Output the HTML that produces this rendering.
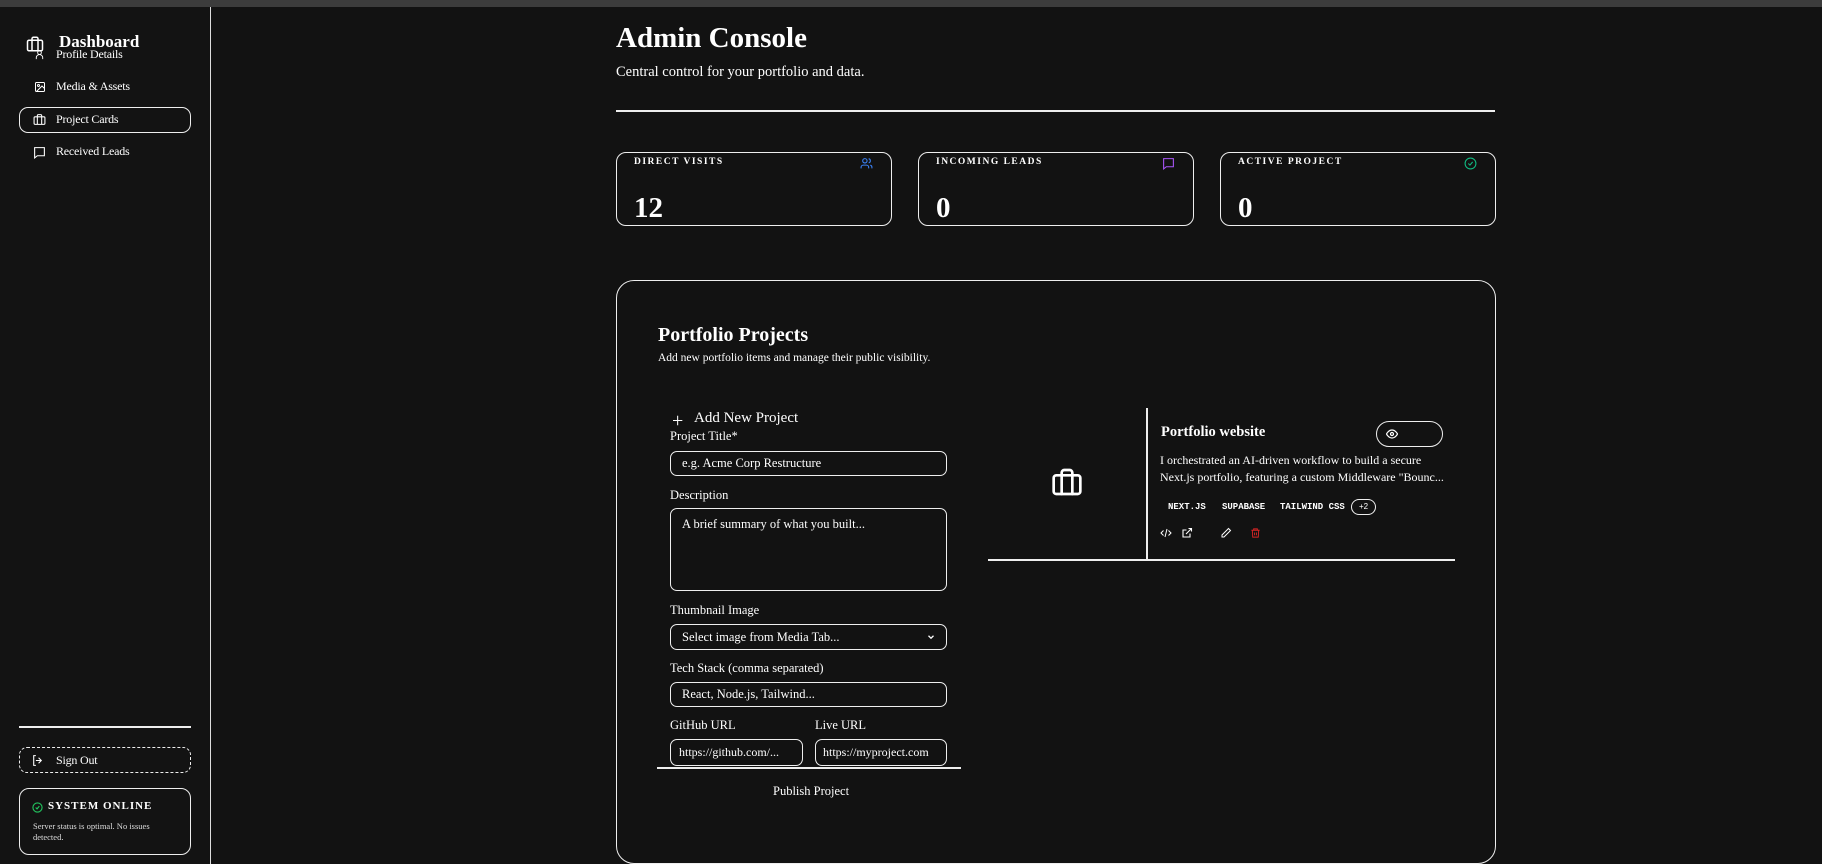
<!DOCTYPE html>
<html><head><meta charset="utf-8"><style>
*{box-sizing:border-box;margin:0;padding:0}
body{width:1822px;height:864px;overflow:hidden;background:#121212;color:#fff;font-family:"Liberation Serif",serif;position:relative}
.a{position:absolute;white-space:nowrap}
.top{left:0;top:0;width:1822px;height:7px;background:#3c3c3c}
.side{left:0;top:7px;width:211px;height:857px;border-right:1px solid #ddd;background:#131313}
.nav{font-size:12px;letter-spacing:-0.2px}
.box{border:1.5px solid #eee;border-radius:8px}
.lab{font-size:12.5px}
.inp{border:1.5px solid #eee;border-radius:7px;font-size:12.5px;padding-left:11px;display:flex;align-items:center}
svg{display:block}
.tag{font-family:"Liberation Mono",monospace;font-weight:bold;font-size:9px}
</style></head><body>
<div class="a top"></div>
<div class="a side"></div>

<svg class="a" style="left:26px;top:35px" width="18" height="18" viewBox="0 0 24 24" fill="none" stroke="#fff" stroke-width="2"><rect x="2" y="7" width="20" height="14" rx="2"/><path d="M16 21V5a2 2 0 0 0-2-2h-4a2 2 0 0 0-2 2v16M8 7v14"/></svg>
<div class="a" style="left:59px;top:32px;font-size:17px;font-weight:bold">Dashboard</div>
<svg class="a" style="left:34px;top:48px" width="11" height="13" viewBox="0 0 24 24" fill="none" stroke="#fff" stroke-width="2"><circle cx="12" cy="8" r="4"/><path d="M5 22v-3a6 6 0 0 1 14 0v3"/></svg>
<div class="a nav" style="left:56px;top:47px">Profile Details</div>
<svg class="a" style="left:34px;top:81px" width="12" height="12" viewBox="0 0 24 24" fill="none" stroke="#fff" stroke-width="2"><rect x="3" y="3" width="18" height="18" rx="2"/><circle cx="9" cy="9" r="2"/><path d="M21 15l-5-5L5 21"/></svg>
<div class="a nav" style="left:56px;top:79px">Media &amp; Assets</div>
<div class="a" style="left:19px;top:107px;width:172px;height:26px;border:1.5px solid #eee;border-radius:9px"></div>
<svg class="a" style="left:33px;top:113px" width="13" height="13" viewBox="0 0 24 24" fill="none" stroke="#fff" stroke-width="2"><rect x="2" y="7" width="20" height="14" rx="2"/><path d="M16 21V5a2 2 0 0 0-2-2h-4a2 2 0 0 0-2 2v16M8 7v14"/></svg>
<div class="a nav" style="left:56px;top:112px">Project Cards</div>
<svg class="a" style="left:33px;top:146px" width="13" height="13" viewBox="0 0 24 24" fill="none" stroke="#fff" stroke-width="2"><path d="M3 3h18v15H8l-5 4z"/></svg>
<div class="a nav" style="left:56px;top:144px">Received Leads</div>

<div class="a" style="left:19px;top:726px;width:172px;height:1.5px;background:#eee"></div>
<div class="a" style="left:19px;top:747px;width:172px;height:26px;border:1.5px dashed #eee;border-radius:8px"></div>
<svg class="a" style="left:31px;top:754px" width="13" height="13" viewBox="0 0 24 24" fill="none" stroke="#fff" stroke-width="2"><path d="M9 21H5V3h4M14 7l5 5-5 5M19 12H9"/></svg>
<div class="a nav" style="left:56px;top:753px">Sign Out</div>
<div class="a box" style="left:19px;top:788px;width:172px;height:67px;border-radius:10px"></div>
<svg class="a" style="left:32px;top:802px" width="11" height="11" viewBox="0 0 24 24" fill="none" stroke="#22c55e" stroke-width="2.5"><circle cx="12" cy="12" r="10"/><path d="M8 12l3 3 5-6"/></svg>
<div class="a" style="left:48px;top:800px;font-size:11px;font-weight:bold;letter-spacing:1px">SYSTEM ONLINE</div>
<div class="a" style="left:33px;top:821px;font-size:8.5px;line-height:11px;white-space:normal;width:140px;color:#ddd">Server status is optimal. No issues detected.</div>

<div class="a" style="left:616px;top:22px;font-size:29px;font-weight:bold">Admin Console</div>
<div class="a" style="left:616px;top:64px;font-size:14.5px">Central control for your portfolio and data.</div>
<div class="a" style="left:616px;top:110px;width:879px;height:1.5px;background:#eee"></div>

<div class="a box" style="left:616px;top:152px;width:276px;height:74px;border-radius:10px"></div>
<div class="a box" style="left:918px;top:152px;width:276px;height:74px;border-radius:10px"></div>
<div class="a box" style="left:1220px;top:152px;width:276px;height:74px;border-radius:10px"></div>
<div class="a" style="left:634px;top:157px;font-size:9.5px;font-weight:bold;letter-spacing:1.5px">DIRECT VISITS</div>
<div class="a" style="left:936px;top:157px;font-size:9.5px;font-weight:bold;letter-spacing:1.5px">INCOMING LEADS</div>
<div class="a" style="left:1238px;top:157px;font-size:9.5px;font-weight:bold;letter-spacing:1.5px">ACTIVE PROJECT</div>
<svg class="a" style="left:860px;top:157px" width="13" height="13" viewBox="0 0 24 24" fill="none" stroke="#3b82f6" stroke-width="2"><circle cx="9" cy="7" r="4"/><path d="M2 21v-2a4 4 0 0 1 4-4h6a4 4 0 0 1 4 4v2M16 3.1a4 4 0 0 1 0 7.8M22 21v-2a4 4 0 0 0-3-3.9"/></svg>
<svg class="a" style="left:1162px;top:157px" width="13" height="13" viewBox="0 0 24 24" fill="none" stroke="#a855f7" stroke-width="2"><path d="M3 3h18v15H8l-5 4z"/></svg>
<svg class="a" style="left:1464px;top:157px" width="13" height="13" viewBox="0 0 24 24" fill="none" stroke="#10b981" stroke-width="2"><circle cx="12" cy="12" r="10"/><path d="M8 12l3 3 5-6"/></svg>
<div class="a" style="left:634px;top:192px;font-size:29px;font-weight:bold">12</div>
<div class="a" style="left:936px;top:192px;font-size:29px;font-weight:bold">0</div>
<div class="a" style="left:1238px;top:192px;font-size:29px;font-weight:bold">0</div>

<div class="a" style="left:616px;top:280px;width:880px;height:584px;border:1.5px solid #eee;border-radius:18px"></div>
<div class="a" style="left:658px;top:324px;font-size:20px;font-weight:bold">Portfolio Projects</div>
<div class="a" style="left:658px;top:352px;font-size:11.5px">Add new portfolio items and manage their public visibility.</div>

<div class="a" style="left:672px;top:411px;font-size:20px;line-height:20px">+</div>
<div class="a" style="left:694px;top:410px;font-size:15px">Add New Project</div>
<div class="a lab" style="left:670px;top:429px">Project Title*</div>
<div class="a inp" style="left:670px;top:451px;width:277px;height:25px">e.g. Acme Corp Restructure</div>
<div class="a lab" style="left:670px;top:488px">Description</div>
<div class="a inp" style="left:670px;top:508px;width:277px;height:83px;align-items:flex-start;padding-top:8px">A brief summary of what you built...</div>
<div class="a lab" style="left:670px;top:603px">Thumbnail Image</div>
<div class="a inp" style="left:670px;top:624px;width:277px;height:26px">Select image from Media Tab...</div>
<svg class="a" style="left:926px;top:632px" width="10" height="10" viewBox="0 0 24 24" fill="none" stroke="#fff" stroke-width="3"><path d="M6 9l6 6 6-6"/></svg>
<div class="a lab" style="left:670px;top:661px">Tech Stack (comma separated)</div>
<div class="a inp" style="left:670px;top:682px;width:277px;height:25px">React, Node.js, Tailwind...</div>
<div class="a lab" style="left:670px;top:718px">GitHub URL</div>
<div class="a lab" style="left:815px;top:718px">Live URL</div>
<div class="a inp" style="left:670px;top:739px;width:133px;height:27px;padding-left:8px;font-size:12px">https://github.com/...</div>
<div class="a inp" style="left:815px;top:739px;width:132px;height:27px;padding-left:7px;font-size:12px">https://myproject.com</div>
<div class="a" style="left:657px;top:767px;width:304px;height:1.5px;background:#eee"></div>
<div class="a lab" style="left:773px;top:784px">Publish Project</div>

<div class="a" style="left:1146px;top:408px;width:1.5px;height:151px;background:#eee"></div>
<div class="a" style="left:988px;top:559px;width:467px;height:1.5px;background:#eee"></div>
<svg class="a" style="left:1051px;top:466px" width="32" height="32" viewBox="0 0 24 24" fill="none" stroke="#fff" stroke-width="2" stroke-linecap="round"><rect x="2" y="7" width="20" height="14" rx="2"/><path d="M16 21V5a2 2 0 0 0-2-2h-4a2 2 0 0 0-2 2v16M8 7v14"/></svg>
<div class="a" style="left:1161px;top:424px;font-size:14.5px;font-weight:bold">Portfolio website</div>
<div class="a" style="left:1376px;top:421px;width:67px;height:26px;border:1.5px solid #eee;border-radius:13px"></div>
<svg class="a" style="left:1386px;top:429px" width="12" height="10" viewBox="0 0 24 20" fill="none" stroke="#fff" stroke-width="2.5"><path d="M1 10s4-8 11-8 11 8 11 8-4 8-11 8S1 10 1 10z"/><circle cx="12" cy="10" r="3"/></svg>
<div class="a" style="left:1160px;top:452px;font-size:12px;line-height:17px">I orchestrated an AI-driven workflow to build a secure<br>Next.js portfolio, featuring a custom Middleware "Bounc...</div>
<div class="a tag" style="left:1168px;top:502px">NEXT.JS</div>
<div class="a tag" style="left:1222px;top:502px">SUPABASE</div>
<div class="a tag" style="left:1280px;top:502px">TAILWIND CSS</div>
<div class="a" style="left:1351px;top:499px;width:25px;height:16px;border:1.5px solid #eee;border-radius:8px;font-size:8px;text-align:center;line-height:13px;font-family:'Liberation Sans',sans-serif">+2</div>
<svg class="a" style="left:1160px;top:527px" width="12" height="12" viewBox="0 0 24 24" fill="none" stroke="#fff" stroke-width="2"><path d="M7 7l-5 5 5 5M17 7l5 5-5 5M14 4l-4 16"/></svg>
<svg class="a" style="left:1181px;top:527px" width="12" height="12" viewBox="0 0 24 24" fill="none" stroke="#fff" stroke-width="2.2"><path d="M18 13v7H4V6h7M15 3h6v6M10 14L21 3"/></svg>
<svg class="a" style="left:1220px;top:527px" width="12" height="12" viewBox="0 0 24 24" fill="none" stroke="#fff" stroke-width="2"><path d="M17 3l4 4L8 20H4v-4z"/></svg>
<svg class="a" style="left:1250px;top:527px" width="11" height="12" viewBox="0 0 24 24" fill="none" stroke="#dc2626" stroke-width="2"><path d="M3 6h18M8 6V3h8v3M5 6l1 15h12l1-15M10 11v6M14 11v6"/></svg>
</body></html>
